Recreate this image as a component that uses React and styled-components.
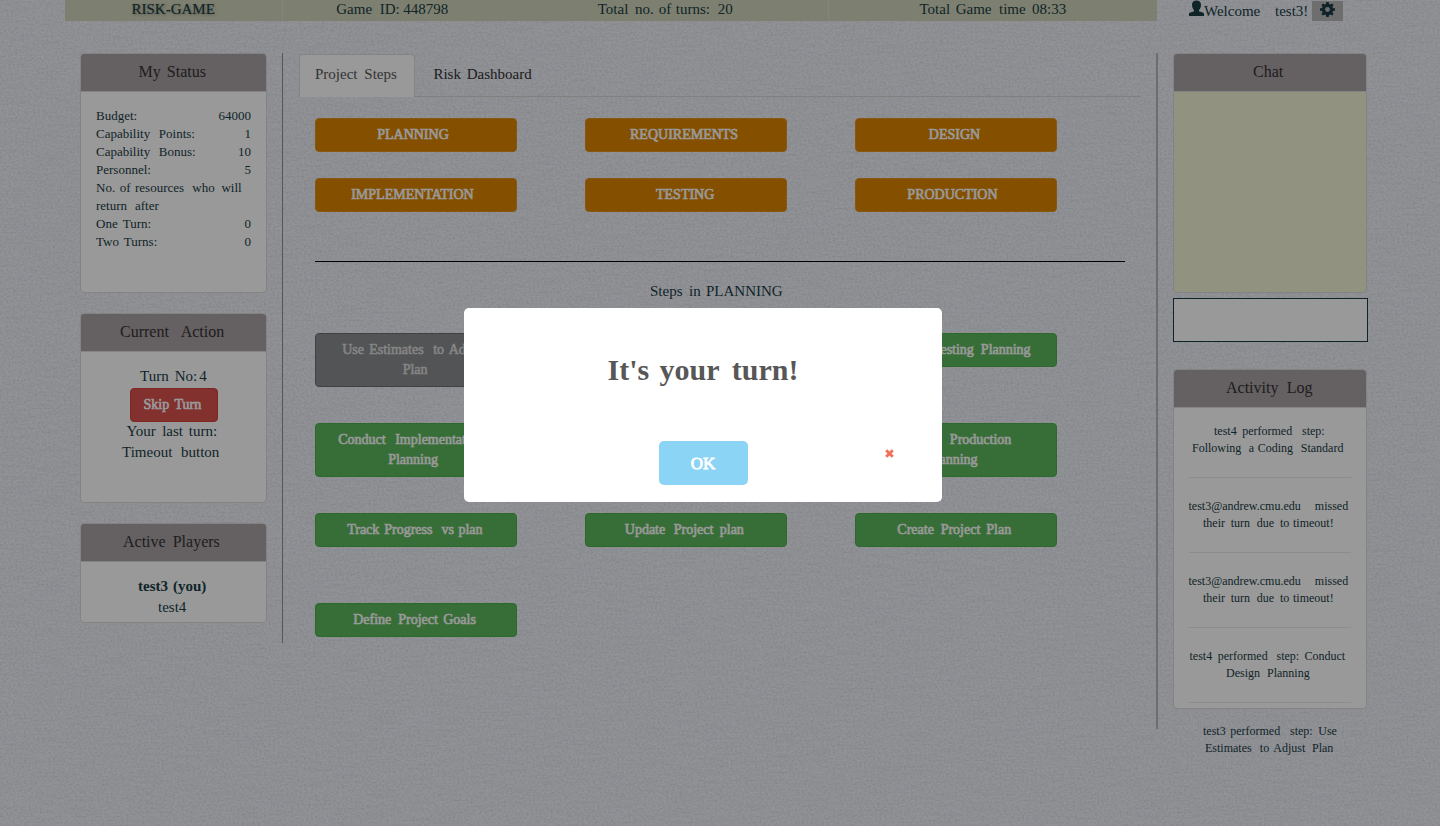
import React from "react";
import styled, { createGlobalStyle, css } from "styled-components";

const Global = createGlobalStyle`
  *, *::before, *::after { box-sizing: border-box; }
  html, body { margin: 0; padding: 0; height: 100%; overflow: hidden; }
  body {
    font-family: "Liberation Serif", "Times New Roman", serif;
    font-size: 15px;
    line-height: 21px;
    color: #1a3c44;
    background: #e8ebf4;
  }
`;

const faux = css`-webkit-text-stroke: 0.6px currentColor;`;

const Page = styled.div`
  position: relative;
  isolation: isolate;
  height: 826px;
  overflow: hidden;
  background: #f4f6fd;
`;
const Texture = styled.svg`
  position: absolute;
  inset: 0;
  z-index: -1;
  width: 100%;
  height: 100%;
`;
const Container = styled.div`
  width: 1310px;
  margin-left: 65px;
`;

/* Words set on fixed stops inside a phrase of known measure */
const PhraseBox = styled.span`
  display: inline-block;
  width: ${(p) => p.$w}px;
  text-align: left;
  white-space: nowrap;
  vertical-align: top;
`;
const Word = styled.span`
  display: inline-block;
  white-space: pre;
  ${(p) => p.$w && `width: ${p.$w}px;`}
`;
const Phrase = ({ t, w, at = [] }) => {
  const words = t.split(" ");
  const stops = [0, ...at];
  return (
    <PhraseBox $w={w}>
      {words.map((word, i) => (
        <Word key={i} $w={i < words.length - 1 ? stops[i + 1] - stops[i] : 0}>
          {i < words.length - 1 ? word + " " : word}
        </Word>
      ))}
    </PhraseBox>
  );
};

const TopRow = styled.header`
  display: flex;
  height: 21px;
  margin-bottom: 32px;
`;
const TopCell = styled.div`
  width: ${(p) => p.$w}px;
  height: 21px;
  line-height: 19px;
  text-align: center;
  background: #d1d4bb;
  border-right: ${(p) => (p.$rule ? "1px solid #dcdece" : "0")};
  ${(p) => p.$title && css`-webkit-text-stroke: 0.15px currentColor; text-shadow: 1px 1px 3px rgba(0, 0, 0, 0.35);`}
`;
const UserCell = styled.div`
  display: flex;
  align-items: flex-start;
  padding-left: 32px;
  line-height: 22px;
`;
const UserIcon = styled.svg`
  width: 15px;
  height: 16px;
`;
const GearButton = styled.button`
  display: flex;
  align-items: flex-start;
  width: 31px;
  height: 20px;
  margin: 1px 0 0;
  padding: 1px 0 0 8px;
  border: 0;
  background: #b8b8b8;
  color: inherit;
  svg { display: block; width: 15px; height: 15px; }
`;

const Columns = styled.main`
  display: flex;
  align-items: flex-start;
`;
const LeftColumn = styled.aside`
  width: 218px;
  height: 590px;
  padding: 0 15px;
  border-right: 1px solid #8b8e94;
`;
const Middle = styled.section`
  width: 874px;
  padding: 1px 16px 0 16px;
`;
const RightColumn = styled.aside`
  height: 676px;
  width: 212px;
  margin-left: -1px;
  padding-left: 15px;
  border-left: 2px solid #b4b6ba;
`;

const Panel = styled.section`
  width: ${(p) => p.$w || 187}px;
  height: ${(p) => p.$h}px;
  margin-bottom: ${(p) => p.$gap ?? 20}px;
  background: ${(p) => p.$bg || "#ffffff"};
  border: 1px solid #dadada;
  border-radius: 4px;
`;
const PanelHead = styled.h3`
  height: 38px;
  margin: 0;
  padding-top: 8px;
  font-size: 16px;
  font-weight: 400;
  line-height: 19px;
  text-align: center;
  color: #333;
  background: #a8a0a2;
  border-bottom: 1px solid #dcdcdc;
  border-radius: 3px 3px 0 0;
`;
const PanelBody = styled.div`
  padding: ${(p) => p.$top ?? 15}px 15px 0;
  text-align: center;
`;
const Stat = styled.div`
  display: flex;
  justify-content: space-between;
  font-size: 13px;
  line-height: 18px;
`;
const Line = styled.div`
  margin: 0 -15px;
  ${(p) => p.$bold && "font-weight: 700;"}
`;
const SkipButton = styled.button`
  display: block;
  width: 88px;
  height: 34px;
  margin: 1px auto -1px 34px;
  padding: 0;
  font: 14px/20px "Liberation Serif", serif;
  color: #fff;
  background: #d9534f;
  border: 1px solid #d43f3a;
  border-radius: 4px;
  ${faux}
`;

const Tabs = styled.nav`
  display: flex;
  gap: 2.4px;
  height: 43px;
  margin-bottom: 21px;
  border-bottom: 1px solid #d6d6d6;
`;
const Tab = styled.a`
  height: 43px;
  padding: 9px 0 0 15px;
  border: 1px solid transparent;
  border-bottom: 0;
  width: ${(p) => p.$w}px;
  color: ${(p) => (p.$active ? "#555" : "#333")};
  ${(p) => p.$active && css`
    background: #fff;
    border-color: #dcdcdc;
    border-radius: 4px 4px 0 0;
  `}
`;
const Grid = styled.div`
  display: grid;
  grid-template-columns: repeat(3, 269.83px);
  grid-auto-rows: ${(p) => p.$row}px;
  align-items: start;
  margin-left: 16px;
`;
const tones = {
  orange: ["#dc8500", "#e09320", "#fff"],
  green: ["#5cb85c", "#4cae4c", "#fff"],
  gray: ["#8b8c8e", "#6c6d70", "#dcdcdc"],
};
const StepButton = styled.button`
  width: 202.4px;
  min-height: 34px;
  padding: 6px 0;
  font: 14px/20px "Liberation Serif", serif;
  text-align: center;
  color: ${(p) => tones[p.$tone][2]};
  background: ${(p) => tones[p.$tone][0]};
  border: 1px solid ${(p) => tones[p.$tone][1]};
  border-radius: 4px;
  ${(p) => p.$column && `grid-column: ${p.$column};`}
  ${faux}
`;
const Rule = styled.hr`
  height: 1px;
  margin: 23px 16px 19px;
  border: 0;
  background: #000;
`;
const StepsTitle = styled.div`
  margin: 0 0 31px 15px;
  width: 810px;
  text-align: center;
`;

const ChatInput = styled.textarea`
  display: block;
  width: 195px;
  height: 44px;
  margin: 0 0 27px;
  border: 1px solid #1a3c44;
  background: #fff;
  resize: none;
  outline: 0;
`;
const LogEntry = styled.div`
  height: ${(p) => (p.$first ? 55 : 75)}px;
  padding-top: ${(p) => (p.$first ? 0 : 20)}px;
  font-size: 12px;
  line-height: 17px;
  text-align: center;
  border-bottom: ${(p) => (p.$last ? "0" : "1px solid #eaeaea")};
  > div { margin: 0 -15px; }
`;

const Overlay = styled.div`
  position: fixed;
  inset: 0;
  z-index: 10;
  background: rgba(0, 0, 0, 0.4);
`;
const Modal = styled.div`
  position: absolute;
  left: 464px;
  top: 308px;
  width: 478px;
  height: 194px;
  padding: 42px 0 0;
  text-align: center;
  background: #fff;
  border-radius: 5px;
`;
const ModalTitle = styled.h2`
  height: 40px;
  margin: 0 0 51px;
  font-size: 30px;
  line-height: 40px;
  font-weight: 700;
  color: #575757;
`;
const ModalActions = styled.div`
  display: grid;
  grid-template-columns: 195px 89px 1fr;
`;
const OkButton = styled.button`
  grid-column: 2;
  height: 44px;
  padding: 1px 1px 0 0;
  font: 17px/24px "Liberation Serif", serif;
  color: #fff;
  background: #8cd4f5;
  border: 0;
  border-radius: 5px;
  -webkit-text-stroke: 0.8px currentColor;
`;
const RemoveIcon = styled.svg`
  width: 9px;
  height: 9px;
  margin: 8px 0 0 137px;
`;

const stats = [
  [{ t: "Budget:", w: 45 }, "64000"],
  [{ t: "Capability Points:", w: 110, at: [62.8] }, "1"],
  [{ t: "Capability Bonus:", w: 110, at: [62.8] }, "10"],
  [{ t: "Personnel:", w: 80 }, "5"],
  [{ t: "No. of resources who will", w: 150, at: [23.7, 39, 96.3, 125.5] }, ""],
  [{ t: "return after", w: 80, at: [39] }, ""],
  [{ t: "One Turn:", w: 60, at: [26.7] }, "0"],
  [{ t: "Two Turns:", w: 70, at: [27.8] }, "0"],
];
const phases = [
  ["PLANNING", 78], ["REQUIREMENTS", 112], ["DESIGN", 54],
  ["IMPLEMENTATION", 130], ["TESTING", 60], ["PRODUCTION", 97],
];
const steps = [
  { tone: "gray", column: 1, lines: [{ t: "Use Estimates to Adjust", w: 148, at: [27, 91, 106.5] }, { t: "Plan", w: 27 }] },
  { column: 3, lines: [{ t: "Conduct Testing Planning", w: 150, at: [52, 100] }] },
  { column: 1, lines: [{ t: "Conduct Implementation", w: 156, at: [57] }, { t: "Planning", w: 56 }] },
  { column: 3, lines: [{ t: "Conduct Production", w: 126, at: [57] }, { t: "Planning", w: 56 }] },
  { column: 1, lines: [{ t: "Track Progress vs plan", w: 138, at: [37, 94.3, 111.3] }] },
  { column: 2, lines: [{ t: "Update Project plan", w: 122.5, at: [49, 95] }] },
  { column: 3, lines: [{ t: "Create Project Plan", w: 117, at: [43.3, 89] }] },
  { column: 1, lines: [{ t: "Define Project Goals", w: 126, at: [45, 90] }] },
];
const timeout = [
  { t: "test3@andrew.cmu.edu missed", w: 163, at: [126.3] },
  { t: "their turn due to timeout!", w: 134, at: [27.7, 53.8, 77, 90] },
];
const log = [
  [{ t: "test4 performed step:", w: 112, at: [28.2, 88] }, { t: "Following a Coding Standard", w: 156, at: [56.7, 65.8, 108.8] }],
  timeout,
  timeout,
  [{ t: "test4 performed step: Conduct", w: 161, at: [28.2, 87, 115] }, { t: "Design Planning", w: 88, at: [41] }],
  [{ t: "test3 performed step: Use", w: 134, at: [27.2, 87, 115.3] }, { t: "Estimates to Adjust Plan", w: 130, at: [54.8, 68.3, 107] }],
];

const Linen = () => (
  <Texture aria-hidden="true">
    <filter id="weave" x="0" y="0" width="100%" height="100%">
      <feTurbulence type="fractalNoise" baseFrequency="0.45 0.5" numOctaves="2" seed="8" />
      <feColorMatrix values="0 0 0 0 0.35  0 0 0 0 0.37  0 0 0 0 0.42  0.5 0 0 0 -0.17" />
    </filter>
    <filter id="threads" x="0" y="0" width="100%" height="100%">
      <feTurbulence type="fractalNoise" baseFrequency="0.03 0.6" numOctaves="2" seed="3" />
      <feColorMatrix values="0 0 0 0 0.35  0 0 0 0 0.37  0 0 0 0 0.42  0.2 0 0 0 -0.08" />
    </filter>
    <rect width="100%" height="100%" filter="url(#weave)" />
    <rect width="100%" height="100%" filter="url(#threads)" />
  </Texture>
);

export default function App() {
  return (
    <Page>
      <Global />
      <Linen />
      <Container>
        <TopRow>
          <TopCell $w={218} $rule $title><Phrase t="RISK-GAME" w={84} /></TopCell>
          <TopCell $w={218.5}><Phrase t="Game ID: 448798" w={112} at={[43.5, 67]} /></TopCell>
          <TopCell $w={327.5} $rule><Phrase t="Total no. of turns: 20" w={134} at={[37.2, 61, 78, 120]} /></TopCell>
          <TopCell $w={328}><Phrase t="Total Game time 08:33" w={147} at={[36.2, 79.5, 112.5]} /></TopCell>
          <UserCell>
            <UserIcon viewBox="0 0 15 16">
              <path fill="#1a3c44" d="M7.500 .6C10.600 .6 12 2.400 12 5c0 2.200-.9 4.100-2 5.100v.8c0 .4.200.6.600.7l3 .9c1 .3 1.400.8 1.400 1.700V16H0v-1.800c0-.9.4-1.400 1.400-1.700l3-.9c.4-.1.600-.3.600-.7v-.8C3.900 9.100 3 7.200 3 5 3 2.400 4.400 .6 7.500 .6z" />
            </UserIcon>
            <Phrase t="Welcome test3!" w={108} at={[71]} />
            <GearButton>
              <svg viewBox="0 0 14 14">
                <path fill="#1a3c44" fillRule="evenodd" d="M5.900 0h2.200l.4 1.900 1.100.5L11.200 1.300l1.500 1.500-1.100 1.600.5 1.100 1.900.4v2.200l-1.900.4-.5 1.100 1.100 1.600-1.500 1.500-1.600-1.100-1.100.5-.4 1.900H5.900l-.4-1.900-1.100-.5-1.600 1.100-1.500-1.500 1.100-1.600-.5-1.100L0 8.100V5.900l1.900-.4.5-1.100L1.300 2.800l1.500-1.500 1.600 1.100 1.100-.5zM7 4.700A2.300 2.300 0 1 0 7 9.300 2.300 2.300 0 1 0 7 4.700z" />
              </svg>
            </GearButton>
          </UserCell>
        </TopRow>

        <Columns>
          <LeftColumn>
            <Panel $h={240}>
              <PanelHead><Phrase t="My Status" w={70} at={[28.3]} /></PanelHead>
              <PanelBody>
                {stats.map(([label, value], i) => (
                  <Stat key={i}><Phrase {...label} /><span>{value}</span></Stat>
                ))}
              </PanelBody>
            </Panel>
            <Panel $h={190}>
              <PanelHead><Phrase t="Current Action" w={107} at={[60.7]} /></PanelHead>
              <PanelBody $top={14}>
                <Line><Phrase t="Turn No: 4" w={67} at={[34.7, 59.3]} /></Line>
                <SkipButton><Phrase t="Skip Turn" w={61} at={[31]} /></SkipButton>
                <Line><Phrase t="Your last turn:" w={94} at={[35.7, 62.3]} /></Line>
                <Line><Phrase t="Timeout button" w={103} at={[59]} /></Line>
              </PanelBody>
            </Panel>
            <Panel $h={100}>
              <PanelHead><Phrase t="Active Players" w={101} at={[49.7]} /></PanelHead>
              <PanelBody $top={14}>
                <Line $bold><Phrase t="test3 (you)" w={71} at={[35]} /></Line>
                <Line><Phrase t="test4" w={31} /></Line>
              </PanelBody>
            </Panel>
          </LeftColumn>

          <Middle>
            <Tabs>
              <Tab $w={116} $active><Phrase t="Project Steps" w={90} at={[49.3]} /></Tab>
              <Tab $w={130}><Phrase t="Risk Dashboard" w={100} at={[33.3]} /></Tab>
            </Tabs>
            <Grid $row={60}>
              {phases.map(([t, w]) => (
                <StepButton key={t} $tone="orange"><Phrase t={t} w={w} /></StepButton>
              ))}
            </Grid>
            <Rule />
            <StepsTitle><Phrase t="Steps in PLANNING" w={138} at={[39, 56]} /></StepsTitle>
            <Grid $row={90}>
              {steps.map((s, i) => (
                <StepButton key={i} $tone={s.tone || "green"} $column={s.column}>
                  {s.lines.map((l) => <div key={l.t}><Phrase {...l} /></div>)}
                </StepButton>
              ))}
            </Grid>
          </Middle>

          <RightColumn>
            <Panel $w={194} $h={240} $gap={5} $bg="#f2f3d4">
              <PanelHead><Phrase t="Chat" w={34} /></PanelHead>
            </Panel>
            <ChatInput />
            <Panel $w={194} $h={340}>
              <PanelHead><Phrase t="Activity Log" w={88} at={[60.7]} /></PanelHead>
              <PanelBody>
                {log.map((lines, i) => (
                  <LogEntry key={i} $first={i === 0} $last={i === log.length - 1}>
                    {lines.map((l) => <div key={l.t}><Phrase {...l} /></div>)}
                  </LogEntry>
                ))}
              </PanelBody>
            </Panel>
          </RightColumn>
        </Columns>
      </Container>

      <Overlay>
        <Modal>
          <ModalTitle><Phrase t="It's your turn!" w={191} at={[52, 124.3]} /></ModalTitle>
          <ModalActions>
            <OkButton>OK</OkButton>
            <RemoveIcon viewBox="0 0 9 9">
              <path d="M1.200 1.200 7.800 7.800M7.800 1.200 1.200 7.800" stroke="#f0705a" strokeWidth="2.900" />
            </RemoveIcon>
          </ModalActions>
        </Modal>
      </Overlay>
    </Page>
  );
}
